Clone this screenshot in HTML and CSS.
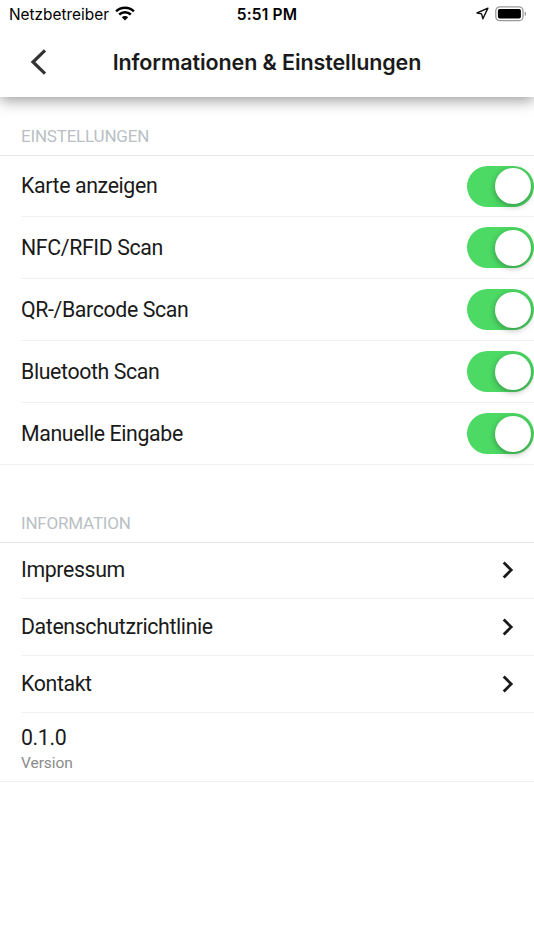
FILE: index.html
```html
<!DOCTYPE html>
<html lang="de">
<head>
<meta charset="utf-8">
<title>Informationen &amp; Einstellungen</title>
<link rel="stylesheet" href="styles.css">
</head>
<body>
<header class="header">
  <div class="status">
    <div class="carrier"><span class="carrier-name">Netzbetreiber</span>
      <svg class="wifi" width="20" height="15" viewBox="0 0 20 15"><g fill="none" stroke="#000" stroke-width="2.5"><path d="M1.1 5.3A12.7 12.7 0 0 1 18.9 5.3"/><path d="M4.2 8.5A8.3 8.3 0 0 1 15.8 8.5"/></g><path d="M10 14.5L6.8 11.2A4.6 4.6 0 0 1 13.2 11.2Z"/></svg>
    </div>
    <time class="clock">5:51 PM</time>
    <div class="indicators">
      <svg width="13" height="13" viewBox="0 0 13 13"><path d="M11.9 1.1L1 6L5.6 6.9L6.9 11.8Z" fill="none" stroke="#111" stroke-width="1.4" stroke-linejoin="round"/></svg>
      <svg width="32" height="16" viewBox="0 0 32 16"><rect x=".8" y=".9" width="27.2" height="13.8" rx="4" fill="none" stroke="#999" stroke-width="1.3"/><rect x="2.9" y="2.9" width="23" height="9.7" rx="1.8"/><path d="M29.7 5.5Q31.2 6 31.2 7.8T29.7 10.1Z" fill="#999"/></svg>
    </div>
  </div>
  <div class="titlebar">
    <svg class="back" width="18" height="28" viewBox="0 0 18 28"><path d="M15 2.4L3 14L15 25.6" fill="none" stroke="#333" stroke-width="3.2"/></svg>
    <h1 class="title">Informationen &amp; Einstellungen</h1>
  </div>
</header>
<main>
  <section class="settings">
    <h2 class="heading">EINSTELLUNGEN</h2>
    <ul class="list">
      <li class="row"><span class="label">Karte anzeigen</span><span class="toggle"><span class="knob"></span></span></li>
      <li class="row"><span class="label">NFC/RFID Scan</span><span class="toggle"><span class="knob"></span></span></li>
      <li class="row"><span class="label">QR-/Barcode Scan</span><span class="toggle"><span class="knob"></span></span></li>
      <li class="row"><span class="label">Bluetooth Scan</span><span class="toggle"><span class="knob"></span></span></li>
      <li class="row"><span class="label">Manuelle Eingabe</span><span class="toggle"><span class="knob"></span></span></li>
    </ul>
  </section>
  <section class="information">
    <h2 class="heading">INFORMATION</h2>
    <ul class="list">
      <li class="row link"><span class="label">Impressum</span><svg class="chevron" width="12" height="18" viewBox="0 0 12 18"><path d="M1.7 1.6L9.2 9L1.7 16.4" fill="none" stroke="#1a1a1a" stroke-width="2.8"/></svg></li>
      <li class="row link"><span class="label">Datenschutzrichtlinie</span><svg class="chevron" width="12" height="18" viewBox="0 0 12 18"><path d="M1.7 1.6L9.2 9L1.7 16.4" fill="none" stroke="#1a1a1a" stroke-width="2.8"/></svg></li>
      <li class="row link"><span class="label">Kontakt</span><svg class="chevron" width="12" height="18" viewBox="0 0 12 18"><path d="M1.7 1.6L9.2 9L1.7 16.4" fill="none" stroke="#1a1a1a" stroke-width="2.8"/></svg></li>
      <li class="row version"><span class="label">0.1.0</span><span class="note">Version</span></li>
    </ul>
  </section>
</main>
</body>
</html>
```
FILE: styles.css
```css
* { box-sizing: border-box; }
body {
  margin: 0;
  background: #fff;
  color: #1a1a1a;
  font-family: Roboto, sans-serif;
  overflow: hidden;
}
.header {
  height: 97px;
  background: #fff;
  box-shadow: 0 3px 14px rgba(0, 0, 0, .42);
  font-family: Inter, sans-serif;
}
.status {
  height: 27px;
  display: grid;
  grid-template-columns: 1fr auto 1fr;
  align-items: center;
  padding: 0 7px 0 9px;
  color: #000;
}
.carrier { display: flex; align-items: center; gap: 6px; font-size: 15.4px; }
.carrier-name { padding-top: 1px; }
.clock { padding-top: 1px; margin-left: -2px; font-size: 15.5px; font-weight: 600; letter-spacing: .2px; }
.indicators { display: flex; justify-content: flex-end; align-items: center; gap: 6px; }
.titlebar {
  height: 69px;
  display: grid;
  grid-template-columns: 60px 1fr 60px;
  align-items: center;
}
.back { margin-left: 30px; }
.title {
  margin: 0;
  text-align: center;
  font-size: 21.5px;
  font-weight: 600;
  letter-spacing: -.1px;
  white-space: nowrap;
}
.heading {
  margin: 0;
  height: 59px;
  padding: 29px 21px 0;
  border-bottom: 1px solid #e5e6e7;
  color: #b9bfc4;
  font-size: 17px;
  font-weight: 400;
  letter-spacing: -.2px;
  line-height: 20px;
}
.list { margin: 0; padding: 0; list-style: none; border-bottom: 1px solid #f2f2f2; }
.row {
  height: 62px;
  margin-left: 21px;
  display: flex;
  justify-content: space-between;
  align-items: center;
  border-bottom: 1px solid #f2f2f2;
}
.settings .row:first-child { height: 61px; }
.row:last-child { height: 61px; border-bottom: 0; }
.label { font-size: 21.3px; letter-spacing: -.37px; line-height: 26px; }
.toggle {
  width: 67px;
  height: 41px;
  padding: 3px;
  border-radius: 21px;
  background: #4cd964;
  display: flex;
  justify-content: flex-end;
  align-items: center;
}
.knob {
  width: 36px;
  height: 36px;
  border-radius: 50%;
  background: #fff;
  box-shadow: 0 2px 6px rgba(0, 0, 0, .32);
}
.information { padding-top: 19px; }
.link { height: 57px; padding-right: 20px; }
.link:first-child { height: 56px; padding-bottom: 1px; }
.version.row {
  height: 68px;
  padding-top: 6px;
  flex-direction: column;
  align-items: flex-start;
  justify-content: center;
}
.note { color: #8b8b8b; font-size: 15.5px; letter-spacing: -.05px; line-height: 24px; }
```
